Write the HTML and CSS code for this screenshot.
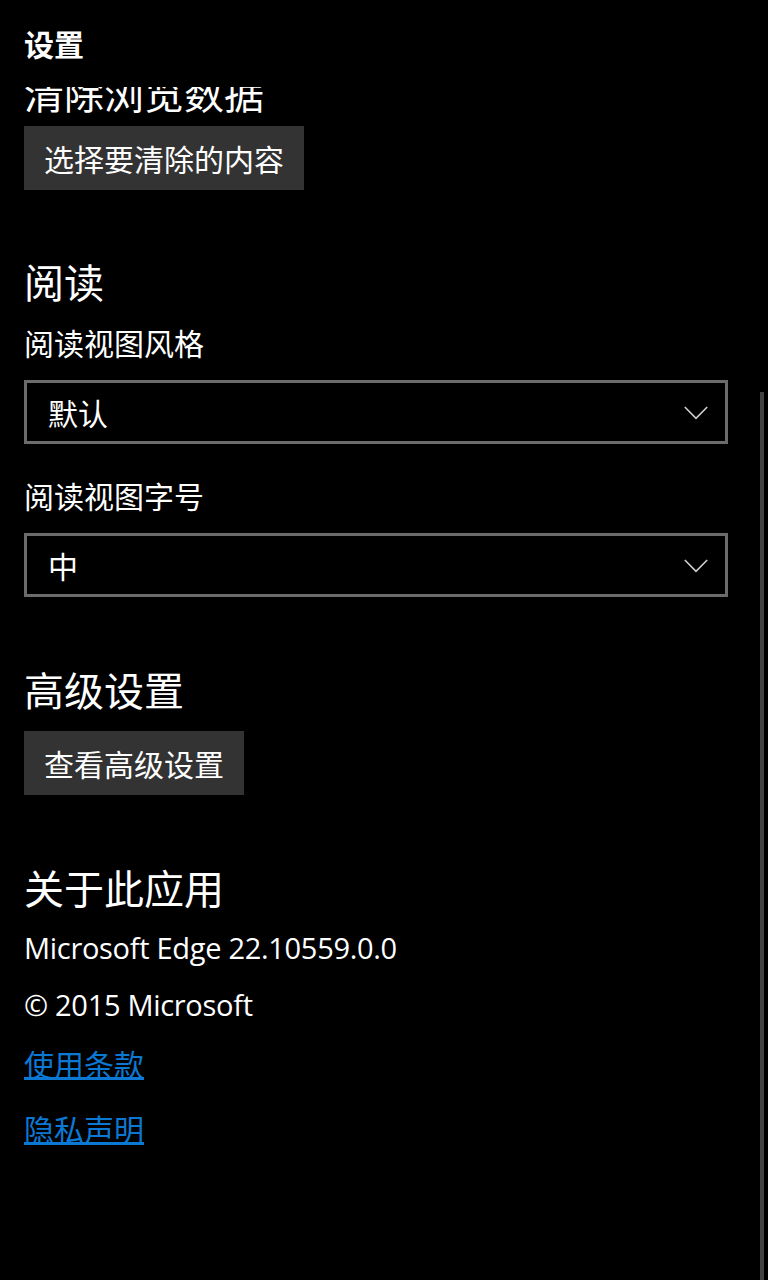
FILE: index.html
```html
<!DOCTYPE html>
<html lang="zh-CN">
<head>
<meta charset="utf-8">
<title>设置</title>
<link rel="stylesheet" href="styles.css">
</head>
<body>
<div class="page">
  <header class="top">
    <h1 class="title">设置</h1>
  </header>
  <div class="viewport">
    <div class="content">
      <h2 class="heading heading-first">清除浏览数据</h2>
      <button class="btn btn-first">选择要清除的内容</button>

      <h2 class="heading">阅读</h2>
      <div class="label">阅读视图风格</div>
      <div class="select">
        <span class="select-value">默认</span>
        <svg class="chevron" width="24" height="14" viewBox="0 0 24 14"><path d="M0.8 1 L12 12.4 L23.2 1" fill="none" stroke="#cfcfcf" stroke-width="1.6"/></svg>
      </div>
      <div class="label">阅读视图字号</div>
      <div class="select">
        <span class="select-value">中</span>
        <svg class="chevron" width="24" height="14" viewBox="0 0 24 14"><path d="M0.8 1 L12 12.4 L23.2 1" fill="none" stroke="#cfcfcf" stroke-width="1.6"/></svg>
      </div>

      <h2 class="heading heading-adv">高级设置</h2>
      <button class="btn btn-adv">查看高级设置</button>

      <h2 class="heading heading-about">关于此应用</h2>
      <p class="info info-first">Microsoft Edge 22.10559.0.0</p>
      <p class="info">© 2015 Microsoft</p>
      <a class="link link-first" href="#">使用条款</a>
      <a class="link" href="#">隐私声明</a>
    </div>
  </div>
  <div class="scrollbar"></div>
</div>
</body>
</html>
```
FILE: styles.css
```css
html, body {
  margin: 0;
  padding: 0;
  background: #000;
}
body {
  font-family: "Noto Sans CJK SC", "Noto Sans", sans-serif;
  color: #fff;
}
.page {
  position: relative;
  width: 768px;
  height: 1280px;
  overflow: hidden;
  background: #000;
}
.top {
  height: 87px;
  padding: 28px 24px 0;
  box-sizing: border-box;
}
.title {
  margin: 0;
  font-size: 30px;
  line-height: 30px;
  font-weight: 700;
}
.viewport {
  height: 1193px;
  overflow: hidden;
}
.content {
  display: flex;
  flex-direction: column;
  align-items: flex-start;
  padding: 0 40px 0 24px;
  margin-top: -15px;
}
.heading {
  margin: 71px 0 0;
  font-size: 40px;
  line-height: 40px;
  font-weight: 400;
}
.heading-first {
  margin-top: 0;
}
.btn {
  border: none;
  background: #333333;
  color: #fff;
  font-family: "Noto Sans CJK SC", sans-serif;
  font-size: 30px;
  line-height: 64px;
  height: 64px;
  padding: 0 20px;
  margin: 22px 0 0;
}
.btn-first {
  margin-top: 14px;
}
.label {
  margin-top: 26px;
  font-size: 30px;
  line-height: 30px;
}
.select + .label {
  margin-top: 36px;
}
.select {
  align-self: stretch;
  margin-top: 23px;
  height: 64px;
  box-sizing: border-box;
  border: 3px solid #6b6b6b;
  display: flex;
  align-items: center;
  justify-content: space-between;
  padding: 0 17px 0 21px;
}
.select-value {
  font-size: 30px;
  line-height: 30px;
}
.chevron {
  display: block;
  margin-top: 1px;
}
.heading-adv {
  margin-top: 72px;
}
.heading-about {
  margin-top: 72px;
}
.info {
  margin: 27px 0 0;
  font-family: "Open Sans", "Noto Sans", sans-serif;
  font-size: 29px;
  letter-spacing: -0.3px;
  line-height: 30px;
}
.info-first {
  margin-top: 26px;
}
.link {
  margin-top: 35px;
  font-size: 30px;
  line-height: 30px;
  color: #0b78d4;
  text-decoration: underline;
  text-underline-offset: 1px;
}
.link-first {
  margin-top: 28px;
}
.scrollbar {
  position: absolute;
  left: 760px;
  top: 392px;
  width: 4px;
  bottom: 0;
  background: #434343;
}
```
